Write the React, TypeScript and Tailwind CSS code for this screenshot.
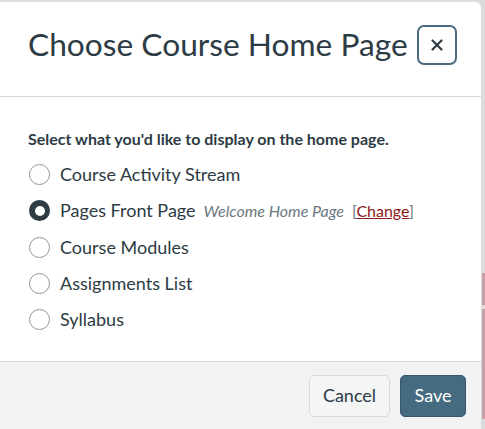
import React from "react";

const options = [
  "Course Activity Stream",
  "Pages Front Page",
  "Course Modules",
  "Assignments List",
  "Syllabus",
];

function Radio({ checked }: { checked: boolean }) {
  return checked ? (
    <span className="box-border flex h-[21px] w-[21px] shrink-0 items-center justify-center rounded-full bg-[#2d3b45]">
      <span className="h-[10px] w-[10px] rounded-full bg-white" />
    </span>
  ) : (
    <span className="box-border h-[21px] w-[21px] shrink-0 rounded-full border border-[#8d959d] bg-white" />
  );
}

export default function App() {
  return (
    <div
      className="flex h-[429px] w-[485px] overflow-hidden bg-[#dcdcdc] pt-[2px]"
      style={{ fontFamily: "Lato, 'Open Sans', sans-serif" }}
    >
      <div className="flex h-[427px] w-[481px] shrink-0 flex-col rounded-tr-[6px] bg-white text-[#2d3b45]">
        <div className="flex h-[95px] shrink-0 items-center border-b border-[#d7dadd] pb-[8px] pl-[28px] pr-[24px]">
          <h1 className="flex-1 whitespace-nowrap text-[31.7px] font-normal leading-none text-[#2d3b45]">
            Choose Course Home Page
          </h1>
          <button className="box-border flex h-[40px] w-[40px] shrink-0 items-center justify-center rounded-[7px] border-2 border-[#4b6b80] bg-white">
            <svg width="12" height="12" viewBox="0 0 12 12">
              <path d="M1.5 1.5 L10.5 10.5 M10.5 1.5 L1.5 10.5" stroke="#2d3b45" strokeWidth="2.2" strokeLinecap="round" />
            </svg>
          </button>
        </div>
        <div className="flex flex-1 flex-col pl-[28px] pt-[32px]">
          <p className="whitespace-nowrap text-[16px] font-bold leading-[20px] text-[#2d3b45]">
            Select what you'd like to display on the home page.
          </p>
          <div className="mt-[15px] flex flex-col gap-[15.25px] pl-[1px]">
            {options.map((o, i) => (
              <div key={o} className="flex h-[21px] items-center whitespace-nowrap">
                <Radio checked={i === 1} />
                <span className="ml-[10px] text-[18px] leading-[21px] text-[#2d3b45]">{o}</span>
                {i === 1 && (
                  <>
                    <span className="ml-[8px] text-[16px] italic text-[#6b7780]">Welcome Home Page</span>
                    <span className="ml-[8px] text-[16px] text-[#6b7780]">
                      [<span className="text-[#8b1a1a] underline">Change</span>]
                    </span>
                  </>
                )}
              </div>
            ))}
          </div>
        </div>
        <div className="flex h-[68px] shrink-0 items-center justify-end gap-[10px] border-t border-[#d7dadd] bg-[#f1f2f3] pr-[15px]">
          <button className="box-border h-[42px] w-[81px] rounded-[5px] border border-[#d7dadd] bg-[#f4f5f5] text-[18px] text-[#2d3b45]">
            Cancel
          </button>
          <button className="box-border h-[42px] w-[66px] rounded-[5px] border border-[#34556a] bg-[#456b80] text-[18px] text-white">
            Save
          </button>
        </div>
      </div>
      <div className="flex w-[4px] flex-col pt-[271px]">
        <div className="ml-[1px] h-[32px] bg-[#c9a0a6]" />
        <div className="mt-[4px] ml-[1px] h-[110px] bg-[#c9a0a6]" />
      </div>
    </div>
  );
}
